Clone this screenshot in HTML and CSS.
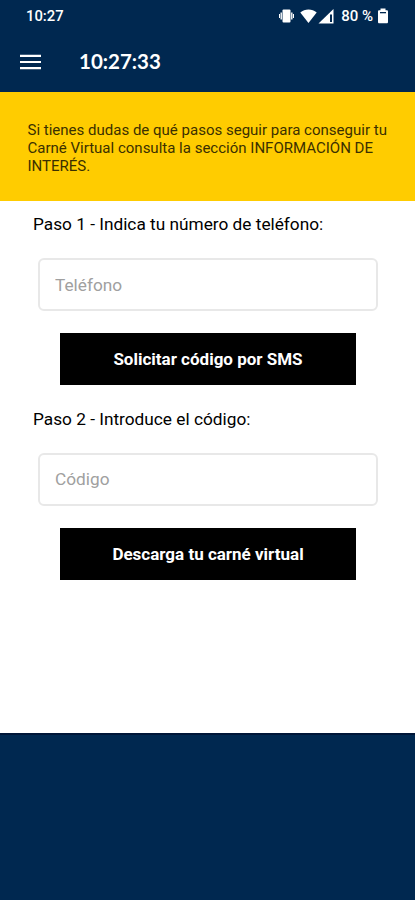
FILE: index.html
```html
<!DOCTYPE html>
<html lang="es">
<head>
    <meta charset="UTF-8">
    <meta name="viewport" content="width=device-width, initial-scale=1.0">
    <title>Carné Virtual</title>
    <link rel="stylesheet" href="styles.css">
</head>
<body>

<div class="status-bar">
    <span class="status-time">10:27</span>
    <div class="status-icons">
        <svg class="icon-vibrate" width="15" height="16" viewBox="0 0 15 16" fill="#fff">
            <rect x="3.500" y="1.500" width="8" height="13" rx="1"/>
            <path d="M1.500 4.500h1.400v7H1.500zM12.100 4.500h1.400v7h-1.400zM0 6h1v4H0zM14 6h1v4h-1z"/>
        </svg>
        <svg class="icon-wifi" width="17" height="14" viewBox="0 0 17 14" fill="#fff">
            <path d="M8.500 14L.3 3.600C2.600 1.600 5.400.5 8.500.5s5.900 1.100 8.200 3.100z"/>
        </svg>
        <svg class="icon-signal" width="16" height="15" viewBox="0 0 16 15">
            <path d="M.5 14.500L15.500 0v14.500z" fill="#fff"/>
            <path d="M12 5.500h2v7.500h-2z" fill="#002850"/>
        </svg>
        <span class="battery-text">80 %</span>
        <svg class="icon-battery" width="12" height="16" viewBox="0 0 12 16">
            <path d="M3.500.5h5v1.700h1.200c.8 0 1.300.5 1.300 1.300V14c0 .8-.5 1.300-1.300 1.300H2.300C1.500 15.300 1 14.800 1 14V3.500c0-.8.5-1.300 1.300-1.300h1.200z" fill="#fff"/>
            <path d="M3 4h6v1.300H3z" fill="#002850"/>
        </svg>
    </div>
</div>

<header class="toolbar">
    <svg width="21" height="16" viewBox="0 0 21 16" fill="#fff">
        <path d="M0 .7h21v2.200H0zM0 6.900h21v2.200H0zM0 13.100h21v2.200H0z"/>
    </svg>
    <h1>10:27:33</h1>
</header>

<div class="notice">
    Si tienes dudas de qué pasos seguir para conseguir tu Carné Virtual consulta la sección INFORMACIÓN DE INTERÉS.
</div>

<main class="content">
    <form class="step">
        <label for="telefono">Paso 1 - Indica tu número de teléfono:</label>
        <input type="text" id="telefono" placeholder="Teléfono">
        <button type="button">Solicitar código por SMS</button>
    </form>

    <form class="step">
        <label for="codigo">Paso 2 - Introduce el código:</label>
        <input type="text" id="codigo" placeholder="Código">
        <button type="button">Descarga tu carné virtual</button>
    </form>
</main>

<footer class="footer"></footer>

</body>
</html>
```

FILE: styles.css
```css
* {
    box-sizing: border-box;
}
body {
    font-family: Roboto, sans-serif;
    background-color: #fff;
    color: #000;
    margin: 0;
    height: 100vh;
    display: flex;
    flex-direction: column;
}
.status-bar {
    display: flex;
    justify-content: space-between;
    align-items: center;
    height: 32px;
    padding: 0 26px;
    background-color: #002850;
    color: #fff;
    font-weight: 500;
}
.status-time {
    font-size: 14.8px;
}
.status-icons {
    display: flex;
    align-items: center;
}
.icon-wifi {
    margin-left: 6px;
}
.icon-signal {
    margin-left: 1px;
}
.battery-text {
    margin-left: 7px;
    font-size: 15px;
    white-space: nowrap;
}
.icon-battery {
    margin-left: 4px;
}
.toolbar {
    display: flex;
    align-items: center;
    gap: 38px;
    height: 60px;
    padding: 0 20px;
    background-color: #002850;
    color: #fff;
}
.toolbar h1 {
    margin: 0 0 2px;
    font-family: Lato, sans-serif;
    font-size: 20.5px;
    font-weight: bold;
}
.notice {
    height: 109px;
    padding: 29px 24px 0 27.5px;
    background-color: #ffcc00;
    color: #3b3000;
    font-size: 15.03px;
    line-height: 18px;
}
.content {
    flex: 1;
    padding-top: 12px;
}
.step {
    display: flex;
    flex-direction: column;
    height: 194.5px;
    padding: 0 37px 0 33px;
}
label {
    font-size: 17.25px;
    line-height: 22px;
    margin-bottom: 23px;
}
input {
    height: 53px;
    margin-left: 5px;
    padding: 0 15px;
    border: 2px solid #e8e8e8;
    border-radius: 6px;
    font-family: inherit;
    font-size: 17.25px;
}
input::placeholder {
    color: #a0a0a0;
}
button {
    height: 52px;
    margin: 22px 22px 0 27px;
    padding: 0;
    border: none;
    background-color: #000;
    color: #fff;
    font-family: inherit;
    font-size: 17px;
    font-weight: bold;
}
.footer {
    height: 167px;
    background-color: #002850;
    border-top: 2px solid #001638;
}
```
